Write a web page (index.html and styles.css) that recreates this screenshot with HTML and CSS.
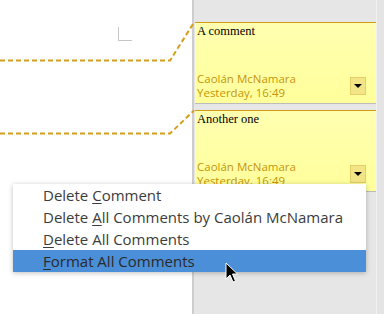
FILE: index.html
```html
<!DOCTYPE html>
<html lang="en">
<head>
	<meta charset="UTF-8">
	<title>Comments</title>
	<link rel="stylesheet" href="styles.css">
</head>
<body>
	<div class="doc">
		<div class="page">
			<div class="corner"></div>
		</div>
		<div class="sidebar">
			<div class="note">
				<div class="note-text">A comment</div>
				<div class="note-foot">
					<div class="note-meta">
						<div>Caolán McNamara</div>
						<div>Yesterday, 16:49</div>
					</div>
					<div class="note-btn"><span class="arrow"></span></div>
				</div>
			</div>
			<div class="note">
				<div class="note-text">Another one</div>
				<div class="note-foot">
					<div class="note-meta">
						<div>Caolán McNamara</div>
						<div>Yesterday, 16:49</div>
					</div>
					<div class="note-btn"><span class="arrow"></span></div>
				</div>
			</div>
		</div>
		<div class="edge"></div>
	</div>

	<!-- anchor lines from text to comments -->
	<svg class="anchors" width="196" height="140" viewBox="0 0 196 140">
		<polyline points="0,60.5 170,60.5 194,22.5" />
		<polyline points="0,133.5 170,133.5 194,110.5" />
	</svg>

	<ul class="menu">
		<li>Delete <u>C</u>omment</li>
		<li>Delete <u>A</u>ll Comments by Caolán McNamara</li>
		<li><u>D</u>elete All Comments</li>
		<li class="active"><u>F</u>ormat All Comments</li>
	</ul>

	<svg class="cursor" width="14" height="22" viewBox="0 0 14 22">
		<path d="M1 1 L1 17 L5 13 L8 20 L10.5 19 L7.5 12 L12.5 12 Z" />
	</svg>
</body>
</html>
```

FILE: styles.css
```css
*{
	margin: 0;
	padding: 0;
	box-sizing: border-box;
	list-style: none;
}
body{
	width: 384px;
	height: 314px;
	overflow: hidden;
	position: relative;
	background: #fff;
}
.doc{
	display: flex;
	height: 314px;
}
.page{
	width: 192px;
	background: #fff;
	padding: 27px 0 0 118px;
}
.corner{
	width: 14px;
	height: 14px;
	border-left: 1px solid #c6c6c6;
	border-bottom: 1px solid #c6c6c6;
}
.sidebar{
	width: 184px;
	background: #e6e6e6;
	border-left: 2px solid #cdcdcd;
	padding: 22px 0 0 1px;
	display: flex;
	flex-direction: column;
	gap: 7px;
}
.edge{
	flex: 1;
	background: #e4e4e4;
	border-left: 1px solid #f2f2f2;
}
.note{
	width: 181px;
	height: 81px;
	background: linear-gradient(#ffffb0, #ffff9c);
	border-top: 1px solid #d19c14;
	box-shadow: 0 1px 0 #bcbcbc;
	display: flex;
	flex-direction: column;
	justify-content: space-between;
	padding: 1px 0 3px 2px;
}
.note-text{
	font-family: "Liberation Serif", serif;
	font-size: 12.5px;
	line-height: 15px;
	color: #000;
}
.note-foot{
	display: flex;
	align-items: center;
	justify-content: space-between;
	padding-right: 10px;
}
.note-meta{
	font-family: "Open Sans", sans-serif;
	font-size: 11.5px;
	line-height: 14px;
	color: #c6950a;
}
.note-btn{
	width: 16px;
	height: 18px;
	background: #f3e486;
	border: 1px solid #e2cf6a;
	display: flex;
	align-items: center;
	justify-content: center;
}
.arrow{
	width: 0;
	height: 0;
	border-left: 4px solid transparent;
	border-right: 4px solid transparent;
	border-top: 4px solid #000;
}
.anchors{
	position: absolute;
	left: 0;
	top: 0;
}
.anchors polyline{
	fill: none;
	stroke: #d49f1c;
	stroke-width: 2;
	stroke-dasharray: 5 3;
}
.menu{
	position: absolute;
	left: 13px;
	top: 184px;
	width: 353px;
	background: #fff;
	box-shadow: 0 1px 5px rgba(0,0,0,0.25);
	font-family: "Open Sans", sans-serif;
	font-size: 15px;
	color: #3c3c3c;
}
.menu li{
	height: 22px;
	line-height: 22px;
	padding-left: 30px;
	white-space: nowrap;
}
.menu li.active{
	background: #4a8fd8;
	color: #2a2a2a;
}
.menu u{
	text-decoration-thickness: 1px;
	text-underline-offset: 2px;
}
.cursor{
	position: absolute;
	left: 225px;
	top: 262px;
}
.cursor path{
	fill: #000;
	stroke: #fff;
	stroke-width: 1;
}
```
